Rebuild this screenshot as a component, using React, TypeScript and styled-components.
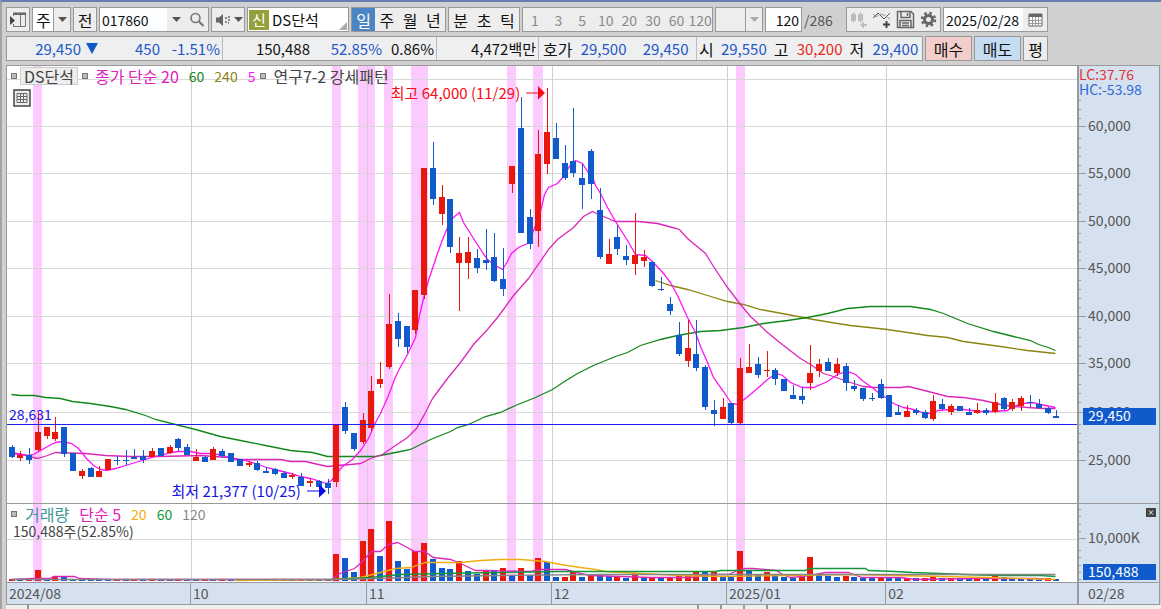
import React from "react";
import styled, { createGlobalStyle, css } from "styled-components";

const GlobalStyle = createGlobalStyle`
  *, *::before, *::after { box-sizing: border-box; }
  body {
    margin: 0;
    background: #d0d0d0;
    color: #111;
    font-family: "Noto Sans CJK KR", sans-serif;
    font-size: 15px;
    line-height: 20px;
  }
  button, input, select { font: inherit; color: inherit; margin: 0; }
`;

const RED = "#e8190c";
const BLUE = "#115acc";
const LINE = "#9a9a9a";

/* ---------- frame ---------- */

const Frame = styled.div`
  border-top: 2px solid #667eb4;
  border-left: 2px solid #a4a4a4;
  min-width: 1060px;
`;

const Toolbar = styled.header`
  display: flex;
  align-items: center;
  gap: 2px;
  padding: 5px 4px 0;
`;

const Group = styled.div<{ $w: number }>`
  display: flex;
  flex: none;
  width: ${(p) => p.$w}px;
  height: 25px;
  border: 1px solid #999;
  background: #eee;
  > * + * { border-left: 1px solid #999; }
`;

const ToolButton = styled.button<{ $w?: number; $on?: boolean; $dim?: boolean }>`
  display: flex;
  align-items: center;
  justify-content: center;
  flex: ${(p) => (p.$w ? `0 0 ${p.$w}px` : "1 1 0")};
  min-width: 0;
  height: 23px;
  padding: 0;
  border: 0;
  border-radius: 0;
  white-space: nowrap;
  font-size: ${(p) => (p.$dim ? 14 : 16)}px;
  background: #ededed;
  color: ${(p) => (p.$dim ? "#8a8a8a" : "#111")};
  ${(p) => p.$on && css`background: #4d84c4; color: #fff;`}
`;

const TextInput = styled.input<{ $right?: boolean }>`
  flex: 1 1 0;
  min-width: 0;
  height: 23px;
  padding: 0 2px;
  border: 0;
  outline: 0;
  border-radius: 0;
  background: #fcfdff;
  font-size: 14px;
  text-align: ${(p) => (p.$right ? "right" : "left")};
`;

const Picker = styled.select<{ $off?: boolean }>`
  appearance: none;
  flex: 1 1 0;
  min-width: 0;
  height: 23px;
  padding: 0 0 0 3px;
  border: 0;
  border-radius: 0;
  outline: 0;
  font-size: 16px;
  background: ${(p) => (p.$off ? "#ededed" : "#fff")};
`;

const ArrowCell = styled.span`
  display: flex;
  align-items: center;
  justify-content: center;
  width: 17px;
  background: #ededed;
`;

const StockName = styled.div`
  position: relative;
  display: flex;
  flex: 1;
  align-items: center;
  gap: 3px;
  padding-left: 1px;
  background: #fff;
  &::after {
    content: "";
    position: absolute;
    right: 1px;
    bottom: 1px;
    border: 4px solid transparent;
    border-right-color: #aaa;
    border-bottom-color: #aaa;
  }
`;

const Badge = styled.span`
  display: flex;
  align-items: center;
  justify-content: center;
  width: 20px;
  height: 20px;
  background: #94a03a;
  color: #fff;
`;

const Total = styled.span`
  width: 40px;
  font-size: 14px;
  color: #555;
`;

const Down = ({ color = "#555" }: { color?: string }) => (
  <svg width="9" height="5" viewBox="0 0 9 5" aria-hidden="true">
    <path d="M0 0H9L4.500 5Z" fill={color} />
  </svg>
);

/* ---------- quote line ---------- */

const QuoteRow = styled.section`
  display: flex;
  gap: 2px;
  padding: 4px 4px 0;
`;

const QuoteBox = styled.div`
  display: flex;
  height: 25px;
  border: 1px solid #999;
  background: #eeeff0;
`;

const QuoteCell = styled.div<{ $w: number }>`
  display: flex;
  align-items: center;
  width: ${(p) => p.$w}px;
  padding: 0 2px;
  white-space: nowrap;
  & + & { border-left: 1px solid #bbb; }
`;

const Value = styled.span<{ $w: number; $c?: string }>`
  width: ${(p) => p.$w}px;
  text-align: right;
  color: ${(p) => p.$c ?? "#111"};
`;

const Caption = styled.span<{ $ml?: number }>`
  margin-left: ${(p) => p.$ml ?? 0}px;
  font-size: 16px;
`;

const Marker = styled.span`
  width: 20px;
  padding-left: 5px;
  line-height: 10px;
`;

const Trade = styled.button<{ $w: number; $bg: string }>`
  width: ${(p) => p.$w}px;
  height: 25px;
  padding: 0;
  border: 1px solid #999;
  border-radius: 0;
  background: ${(p) => p.$bg};
  font-size: 16px;
`;

/* ---------- chart ---------- */

const ChartBox = styled.main`
  display: grid;
  grid-template-columns: minmax(0, 1fr) 82px;
  margin: 4px 1px 0 4px;
  border: 1px solid ${LINE};
  background: #fff;
`;

const Plot = styled.div<{ $h: number }>`
  position: relative;
  height: ${(p) => p.$h}px;
  border-bottom: 1px solid ${LINE};
`;

const Scale = styled.div`
  position: relative;
  border-left: 2px solid ${LINE};
  border-bottom: 1px solid ${LINE};
  background: #d6e1ef;
`;

const Canvas = styled.svg`
  display: block;
  width: 100%;
  height: 100%;
`;

const Legend = styled.div<{ $top: number }>`
  position: absolute;
  top: ${(p) => p.$top}px;
  left: 4px;
  display: flex;
  align-items: center;
  height: 18px;
  white-space: nowrap;
  color: #444;
  font-size: 16px;
`;

const Square = styled.i<{ $mr: number; $ml?: number }>`
  width: 6px;
  height: 6px;
  margin-right: ${(p) => p.$mr}px;
  margin-left: ${(p) => p.$ml ?? 0}px;
  border: 1px solid #777;
  background: #bbb;
`;

const Chip = styled.span`
  padding: 0 3px;
  height: 18px;
  line-height: 17px;
  border: 1px solid #ccc;
  background: #eee;
`;

const Term = styled.span<{ $c: string; $mr: number; $num?: boolean }>`
  margin-right: ${(p) => p.$mr}px;
  font-size: ${(p) => (p.$num ? 14 : 16)}px;
  color: ${(p) => p.$c};
`;

const TableButton = styled.button`
  position: absolute;
  top: 23px;
  left: 6px;
  width: 18px;
  height: 18px;
  padding: 0;
  border: 0;
  background: none;
`;

const Note = styled.div<{ $right: string; $top: number; $c: string }>`
  position: absolute;
  right: ${(p) => p.$right};
  top: ${(p) => p.$top}px;
  display: flex;
  align-items: center;
  gap: 6px;
  height: 18px;
  white-space: nowrap;
  color: ${(p) => p.$c};
`;

const LevelLabel = styled.span`
  position: absolute;
  left: 2px;
  top: 338px;
  font-size: 14px;
  color: #1414e6;
`;

const VolumeText = styled.span`
  position: absolute;
  left: 6px;
  top: 18px;
  font-size: 14px;
  line-height: 18px;
  color: #444;
`;

const ClosePane = styled.button`
  position: absolute;
  top: 4px;
  right: 3px;
  display: flex;
  width: 10px;
  height: 9px;
  padding: 0;
  border: 0;
  background: #444;
`;

const Dates = styled.div`
  display: flex;
  height: 21px;
  background: #d6e1ef;
  font-size: 14px;
  color: #555;
`;

const DateCell = styled.span<{ $grow: number }>`
  flex: ${(p) => p.$grow} 1 0;
  padding-left: 2px;
  & + & { border-left: 1px solid ${LINE}; }
`;

const LastDate = styled.div`
  padding-left: 9px;
  border-left: 2px solid ${LINE};
  background: #d6e1ef;
  font-size: 14px;
  color: #555;
`;

const Footer = styled.footer`
  display: flex;
  height: 5px;
  margin-left: 4px;
  background: #f0f0f0;
`;

const FootTab = styled.span<{ $w: string }>`
  width: ${(p) => p.$w};
  border-right: 2px solid #999;
`;

/* ---------- data: direction, body top, body bottom, high, low ---------- */

type Candle = [0 | 1, number, number, number, number];

const candles: Candle[] = [
  [0, 447, 457, 445, 458], [1, 455, 458, 451, 461], [0, 455, 460, 448, 464], [1, 432, 450, 412, 452],
  [1, 427, 436, 427, 439], [1, 432, 439, 417, 441], [0, 427, 454, 427, 457], [0, 453, 471, 453, 471],
  [1, 471, 476, 469, 479], [0, 468, 477, 467, 477], [1, 471, 477, 466, 477], [1, 459, 470, 459, 470],
  [0, 460, 461, 456, 465], [0, 460, 461, 450, 465], [0, 457, 459, 449, 459], [0, 456, 460, 450, 463],
  [1, 451, 457, 448, 457], [0, 448, 456, 448, 456], [1, 447, 453, 445, 454], [0, 439, 448, 438, 451],
  [0, 447, 455, 444, 455], [1, 457, 461, 449, 461], [0, 457, 462, 456, 462], [1, 449, 460, 447, 460],
  [0, 451, 456, 449, 458], [0, 453, 462, 453, 462], [0, 459, 466, 459, 466], [1, 463, 465, 461, 467],
  [0, 463, 470, 461, 471], [0, 471, 473, 467, 473], [0, 469, 474, 468, 475], [0, 473, 478, 471, 478],
  [1, 475, 477, 473, 479], [0, 477, 486, 473, 486], [1, 481, 483, 479, 487], [0, 481, 487, 480, 487],
  [0, 483, 488, 479, 494], [1, 425, 482, 425, 487], [0, 407, 431, 402, 434], [0, 433, 449, 433, 451],
  [1, 420, 442, 413, 444], [1, 391, 428, 376, 431], [1, 379, 384, 362, 388], [1, 324, 367, 294, 369],
  [0, 321, 339, 313, 347], [0, 326, 347, 326, 353], [1, 290, 330, 290, 334], [1, 168, 295, 168, 299],
  [0, 168, 199, 142, 205], [1, 197, 214, 185, 225], [0, 199, 247, 199, 253], [1, 253, 263, 237, 311],
  [1, 252, 263, 237, 279], [0, 258, 268, 249, 273], [0, 260, 263, 229, 270], [0, 257, 281, 233, 282],
  [0, 279, 289, 248, 296], [1, 166, 184, 166, 193], [0, 128, 233, 97, 233], [0, 217, 244, 209, 249],
  [1, 154, 231, 130, 247], [1, 132, 164, 88, 174], [0, 138, 159, 123, 159], [0, 163, 178, 145, 180],
  [0, 161, 173, 108, 177], [0, 178, 185, 164, 209], [0, 151, 184, 149, 199], [0, 210, 257, 188, 259],
  [1, 254, 264, 239, 264], [0, 237, 249, 225, 255], [0, 256, 260, 245, 265], [1, 255, 264, 213, 275],
  [1, 257, 261, 250, 267], [0, 262, 286, 261, 287], [0, 289, 290, 277, 291], [0, 304, 311, 297, 315],
  [0, 335, 354, 322, 356], [1, 348, 361, 320, 367], [0, 354, 368, 320, 371], [0, 367, 407, 365, 410],
  [0, 410, 414, 400, 426], [1, 407, 419, 398, 419], [0, 403, 423, 403, 425], [1, 368, 423, 358, 425],
  [1, 367, 373, 344, 373], [0, 364, 375, 357, 378], [1, 370, 371, 351, 377], [0, 370, 379, 368, 385],
  [0, 379, 391, 379, 391], [0, 395, 399, 385, 399], [0, 396, 400, 387, 404], [1, 373, 383, 345, 390],
  [1, 364, 371, 359, 377], [0, 362, 371, 358, 371], [1, 364, 373, 358, 376], [0, 366, 383, 363, 391],
  [0, 386, 389, 380, 391], [0, 388, 399, 388, 401], [0, 398, 399, 393, 401], [0, 384, 398, 379, 399],
  [0, 395, 417, 395, 417], [0, 412, 415, 405, 415], [1, 411, 417, 405, 417], [0, 410, 413, 408, 415],
  [0, 412, 418, 410, 419], [1, 401, 419, 395, 421], [0, 404, 409, 399, 410], [1, 406, 412, 404, 415],
  [0, 406, 411, 406, 411], [0, 412, 415, 408, 415], [1, 410, 413, 403, 414], [0, 410, 413, 408, 415],
  [1, 402, 412, 393, 413], [0, 398, 409, 397, 410], [1, 402, 409, 399, 411], [1, 398, 406, 396, 411],
  [0, 402, 403, 395, 407], [0, 404, 408, 399, 409], [0, 408, 413, 407, 414], [0, 416, 418, 410, 418],
];

const volumeTops = [
  579, 579, 579, 570, 579, 577, 576, 579, 579, 579, 579, 579, 579, 579, 579, 579, 579, 579, 579, 579,
  579, 579, 579, 579, 579, 579, 579, 579, 579, 579, 579, 579, 579, 579, 579, 579, 579, 554, 558, 572,
  541, 529, 556, 521, 561, 569, 551, 543, 559, 568, 569, 561, 571, 574, 570, 571, 568, 575, 568, 575,
  558, 562, 577, 577, 571, 577, 575, 575, 576, 577, 578, 573, 578, 577, 577, 577, 575, 575, 571, 571,
  571, 577, 577, 551, 570, 575, 572, 575, 577, 578, 577, 557, 574, 576, 577, 576, 577, 578, 578, 578,
  578, 578, 578, 578, 578, 577, 578, 578, 578, 578, 578, 578, 576, 577, 578, 578, 578, 578, 578, 579,
];

const volumeSides = [
  "RBRRBRBBBB", "BBRBRBRBBR", "BBRBRBBRBB", "BRBRBBBRBB", "RRBRBBRRBB", "BRBBRBRBRB",
  "RBBRRBRBBR", "BRBRBRRRRB", "RBBRBBRBBB", "RRBBBRBBBR", "BBRBRRBRBB", "RBRBBBBBRB",
].join("");

const cx = (i: number) => Math.round(11.5 + i * 8.78);

const bands = [[33, 9], [332, 9], [358, 17], [384, 9], [411, 17], [507, 9], [533, 10], [736, 9]];
const months = [191, 367, 552, 727, 886];
const priceLines = [79, 126, 173, 221, 268, 316, 363, 412, 460];

const ma5 = "11,453 20,454 29,455 33,454 40,450 49,445 55,442 62,441 71,443 78,448 86,458 93,465 100,469 106,470 115,468 125,465 135,462 145,459 155,456 163,454 170,452 178,451 190,451 200,453 212,453 222,455 235,459 245,460 258,464 266,467 278,470 290,473 300,476 310,478 320,481 326,483 331,480 336,473 342,466 352,459 360,450 368,438 375,422 380,413 388,395 394,379 398,370 407,354 415,337 419,315 423,298 428,280 433,265 437,253 442,239 447,227 450,220 454,216 459,212 463,222 468,230 475,241 482,252 487,259 495,265 502,269 507,261 511,253 518,247 527,243 530,238 533,230 537,220 541,207 544,194 548,187 557,183 563,176 569,166 575,160 582,163 587,171 592,176 595,185 600,193 607,207 615,221 627,240 635,254 645,255 653,262 663,273 670,282 677,295 687,317 695,332 700,346 707,362 713,377 723,391 731,403 737,404 745,398 757,388 767,379 776,373 782,375 790,382 802,387 813,387 827,381 837,374 843,372 850,372 855,374 863,381 873,388 880,394 887,398 893,403 903,407 913,409 922,412 930,413 938,410 950,409 963,409 980,411 993,411 1007,410 1013,406 1023,403 1032,402 1040,404 1050,406 1055,407";
const ma20 = "11,452 22,454 33,457 37,458 47,455 55,452 85,453 105,455 130,456 160,456 200,455 228,457 240,459 280,459 290,461 305,461 318,464 327,466 337,465 350,464 360,463 370,458 382,454 395,445 407,437 416,428 425,412 432,398 438,390 447,378 460,362 473,344 487,329 497,317 503,309 513,295 528,278 537,265 548,249 557,239 573,227 583,216 592,211 596,213 610,219 615,221 638,221 657,223 672,227 679,229 687,238 705,253 713,266 727,287 740,304 750,316 767,332 783,345 800,358 810,364 823,373 833,376 847,381 863,386 873,387 900,387 908,386 920,389 947,396 963,397 983,400 1000,404 1013,406 1027,407 1043,408 1055,408";
const ma60 = "11,394 20,395 34,395 45,397 60,398 72,401 90,403 110,406 125,409 145,415 155,419 175,424 195,429 220,436 245,441 265,445 290,450 312,452 327,456 375,456 385,454 400,451 410,449 430,439 450,431 457,427 468,424 485,416 500,412 515,405 535,397 552,389 564,381 577,373 593,365 615,356 627,352 640,345 660,339 677,335 700,331 720,330 743,327 763,323 787,320 807,317 827,313 847,308 870,306 887,306 910,306 930,309 943,313 967,323 993,331 1013,336 1030,340 1038,344 1048,347 1055,350";
const ma240 = "655,280 670,285 687,289 707,295 727,301 743,304 760,309 787,314 813,319 837,323 850,325 887,329 927,335 947,337 963,341 1000,346 1027,350 1055,353";

const vol5 = "11,579 33,578 50,578 53,576 74,576 79,578 110,579 331,579 337,574 345,571 354,568 362,561 371,551 380,551 388,544 397,542 405,546 414,551 424,551 433,557 450,559 458,562 475,570 485,570 530,571 540,569 565,569 580,573 590,575 620,576 650,577 690,577 703,575 710,574 728,574 737,570 745,568 753,568 776,570 782,574 790,577 802,576 815,574 825,572 848,572 853,574 862,577 900,577 915,579 980,578 1035,578 1050,579";
const vol20 = "235,580 331,579 360,577 380,572 395,568 410,567 425,562 460,562 480,560 500,559 520,559 545,561 560,564 580,567 595,569 605,571 640,573 680,575 720,576 790,575 850,574 895,575 940,576 990,577 1055,579";
const vol60 = "331,579 370,577 400,574 440,573 500,572 560,571 600,571 715,571 720,570 805,570 808,568 865,568 868,570 895,571 912,572 940,573 965,574 1000,575 1040,575 1055,576";
const vol120 = "11,579 331,579 380,578 430,576 500,575 600,574 800,574 1055,574";

const Trace = ({ points, color }: { points: string; color: string }) => (
  <polyline points={points} fill="none" stroke={color} strokeWidth="1.3" vectorEffect="non-scaling-stroke" transform="translate(0.5 0.5)" />
);

const Grid = ({ rows, top, bottom }: { rows: number[]; top: number; bottom: number }) => (
  <g shapeRendering="crispEdges">
    {bands.map(([x, w]) => <rect key={x} x={x} y={top} width={w} height={bottom - top} fill="#fdcaff" />)}
    {rows.map((y) => <rect key={y} x="7" y={y} width="1070" height="1" fill="#d8d8d8" />)}
    {months.map((x) => <rect key={x} x={x} y={top} width="1" height={bottom - top} fill="#d0d0d0" />)}
  </g>
);

const PriceChart = () => (
  <Canvas viewBox="7 66 1070 437" preserveAspectRatio="none" role="img" aria-label="DS단석 일봉">
    <Grid rows={priceLines} top={66} bottom={503} />
    <Trace points={ma240} color="#8c8412" />
    <Trace points={ma60} color="#12881a" />
    <Trace points={ma20} color="#dc28b8" />
    <Trace points={ma5} color="#ff14f4" />
    <g shapeRendering="crispEdges">
      {candles.map(([up, top, bottom, high, low], i) => (
        <g key={i} fill={up ? RED : BLUE}>
          <rect x={cx(i)} y={high} width="1" height={Math.max(1, low - high)} />
          <rect x={cx(i) - 3} y={top} width="6" height={bottom - top} />
        </g>
      ))}
      <rect x="7" y="424" width="1070" height="1" fill="#2020f0" />
    </g>
  </Canvas>
);

const VolumeChart = () => (
  <Canvas viewBox="7 504 1070 78" preserveAspectRatio="none" role="img" aria-label="거래량">
    <Grid rows={[539]} top={504} bottom={582} />
    <g shapeRendering="crispEdges">
      {volumeTops.map((y, i) => (
        <rect key={i} x={cx(i) - 3} y={y} width="6" height={581 - y} fill={volumeSides[i] === "R" ? RED : BLUE} />
      ))}
    </g>
    <Trace points={vol5} color="#dc28b8" />
    <Trace points={vol20} color="#f0ac10" />
    <Trace points={vol60} color="#109838" />
    <Trace points={vol120} color="#858585" />
  </Canvas>
);

const AxisText = styled.text<{ $c?: string }>`
  font-size: 14px;
  fill: ${(p) => p.$c ?? "#555"};
`;

const priceLabels: [number, string][] = [
  [126, "60,000"], [173, "55,000"], [221, "50,000"], [268, "45,000"],
  [316, "40,000"], [363, "35,000"], [412, "30,000"], [460, "25,000"],
];

const minorPrice = [79, ...priceLabels.map(([y]) => y)]
  .flatMap((y) => [y + 12, y + 21, y + 30, y + 39])
  .filter((y) => y > 98 && y < 455);

const PriceScale = () => (
  <Canvas viewBox="1080 66 80 437">
    <AxisText x="1080" y="80" $c="#e03434">LC:37.76</AxisText>
    <AxisText x="1080" y="95" $c="#2c6cd4">HC:-53.98</AxisText>
    {minorPrice.map((y) => <rect key={y} x="1080" y={y} width="2" height="1" fill="#999" />)}
    {priceLabels.map(([y, t]) => (
      <g key={t}>
        <rect x="1080" y={y} width="7" height="1" fill="#999" />
        <AxisText x="1089" y={y + 5}>{t}</AxisText>
      </g>
    ))}
    <rect x="1084" y="408" width="73" height="17" fill={BLUE} />
    <AxisText x="1089" y="421" $c="#fff">29,450</AxisText>
  </Canvas>
);

const VolumeScale = () => (
  <Canvas viewBox="1080 504 80 78">
    {[509, 516, 524, 531, 550, 557, 565, 572, 579].map((y) => (
      <rect key={y} x="1080" y={y} width="2" height="1" fill="#999" />
    ))}
    <rect x="1080" y="538" width="7" height="1" fill="#999" />
    <AxisText x="1089" y="543">10,000K</AxisText>
    <rect x="1084" y="564" width="73" height="16" fill={BLUE} />
    <AxisText x="1089" y="577" $c="#fff">150,488</AxisText>
  </Canvas>
);

const Arrow = ({ color }: { color: string }) => (
  <svg width="19" height="14" viewBox="0 0 19 14" aria-hidden="true">
    <path d="M0 6.500H12V0L19 7L12 13.500V7.500H0Z" fill={color} />
  </svg>
);

/* ---------- toolbar icons ---------- */

const PanelIcon = () => (
  <svg width="18" height="18" viewBox="0 0 18 18" fill="none" aria-hidden="true">
    <path d="M4 2.500H16.500V15.500H4" stroke="#777" />
    <path d="M4 1.500H17V4H4Z" fill="#666" />
    <path d="M11.500 4V15M4.500 2V5M4.500 13V16" stroke="#777" />
    <path d="M1 5L6 9.500L1 14Z" fill="#444" />
  </svg>
);

const SearchIcon = () => (
  <svg width="16" height="16" viewBox="0 0 16 16" fill="none" stroke="#777" aria-hidden="true">
    <circle cx="6.500" cy="6" r="4.500" strokeWidth="1.600" />
    <path d="M10 9.500L14.500 14" strokeWidth="2.200" />
  </svg>
);

const SpeakerIcon = () => (
  <svg width="16" height="14" viewBox="0 0 16 14" aria-hidden="true">
    <path d="M1 4.500H4L8 1V13L4 9.500H1Z" fill="#666" />
    <path d="M10 4h2v2h-2zM10 8h2v2h-2zM13 3h2v2h-2zM13 6h2v2h-2zM13 9h1v2h-1z" fill="#888" />
  </svg>
);

const CandlesIcon = () => (
  <svg width="20" height="20" viewBox="0 0 20 20" fill="#bcbcbc" aria-hidden="true">
    <path d="M2 4h5v7H2zM4 2h1v11H4zM9 4h5v7H9zM11 2h1v11h-1z" />
    <path d="M11 15L15 11.500V14H18V16H15V18.500Z" />
  </svg>
);

const WaveIcon = () => (
  <svg width="20" height="20" viewBox="0 0 20 20" fill="none" aria-hidden="true">
    <path d="M1 8L6 3L12 9L18 3" stroke="#555" />
    <path d="M1 4L4 7L8 4L12 5L18 9" stroke="#999" />
    <path d="M14.500 11V18M11 14.500H18" stroke="#444" strokeWidth="2" />
  </svg>
);

const SaveIcon = () => (
  <svg width="19" height="19" viewBox="0 0 19 19" fill="none" stroke="#666" strokeWidth="1.500" aria-hidden="true">
    <path d="M1.500 1.500H15L17.500 4V17.500H1.500Z" />
    <path d="M5 2V7.500H14V2M11.500 3V6M4 17V10.500H15V17M6 13H13M6 15.500H13" />
  </svg>
);

const GearIcon = () => (
  <svg width="17" height="17" viewBox="0 0 17 17" fill="none" stroke="#666" aria-hidden="true">
    <circle cx="8.500" cy="8.500" r="4" strokeWidth="3" />
    <circle cx="8.500" cy="8.500" r="6.500" strokeWidth="2.500" strokeDasharray="2.550 2.555" />
  </svg>
);

const CalendarIcon = () => (
  <svg width="15" height="14" viewBox="0 0 15 14" aria-hidden="true">
    <path d="M1 1H14V13H1Z" fill="#fff" stroke="#666" />
    <path d="M1 1H14V4H1Z" fill="#666" />
    <path d="M1 7.500H14M1 10.500H14M4.500 4V13M7.500 4V13M10.500 4V13" stroke="#999" />
  </svg>
);

const quickTicks = ["1", "3", "5", "10", "20", "30", "60", "120"];

export default function App() {
  return (
    <>
      <GlobalStyle />
      <Frame>
        <Toolbar>
          <Group $w={24}><ToolButton aria-label="패널"><PanelIcon /></ToolButton></Group>
          <Group $w={39}>
            <Picker aria-label="종목 구분"><option>주</option></Picker>
            <ArrowCell><Down /></ArrowCell>
          </Group>
          <Group $w={24}><ToolButton>전</ToolButton></Group>
          <Group $w={110}>
            <TextInput defaultValue="017860" aria-label="종목코드" />
            <ToolButton $w={18} aria-label="최근 종목"><Down /></ToolButton>
            <ToolButton $w={23} aria-label="검색"><SearchIcon /></ToolButton>
          </Group>
          <Group $w={34}>
            <ToolButton $w={21} aria-label="소리"><SpeakerIcon /></ToolButton>
            <ToolButton aria-label="소리 설정"><Down /></ToolButton>
          </Group>
          <Group $w={102}>
            <StockName><Badge>신</Badge>DS단석</StockName>
          </Group>
          <Group $w={95}>
            {["일", "주", "월", "년"].map((t) => <ToolButton key={t} $on={t === "일"}>{t}</ToolButton>)}
          </Group>
          <Group $w={72}>
            {["분", "초", "틱"].map((t) => <ToolButton key={t}>{t}</ToolButton>)}
          </Group>
          <Group $w={191}>
            {quickTicks.map((t) => <ToolButton key={t} $dim>{t}</ToolButton>)}
          </Group>
          <Group $w={48}>
            <Picker $off aria-label="사용자 주기"><option></option></Picker>
            <ArrowCell><Down color="#aaa" /></ArrowCell>
          </Group>
          <Group $w={37}><TextInput $right defaultValue="120" aria-label="봉 개수" /></Group>
          <Total>/286</Total>
          <Group $w={95}>
            <ToolButton aria-label="봉 이동"><CandlesIcon /></ToolButton>
            <ToolButton aria-label="지표 추가"><WaveIcon /></ToolButton>
            <ToolButton aria-label="저장"><SaveIcon /></ToolButton>
            <ToolButton aria-label="설정"><GearIcon /></ToolButton>
          </Group>
          <Group $w={105}>
            <TextInput defaultValue="2025/02/28" aria-label="기준일" />
            <ToolButton $w={24} aria-label="달력"><CalendarIcon /></ToolButton>
          </Group>
        </Toolbar>

        <QuoteRow>
          <QuoteBox>
            <QuoteCell $w={215}>
              <Value $w={72} $c="#2357c8">29,450</Value>
              <Marker>
                <svg width="12" height="11" viewBox="0 0 12 11" aria-hidden="true"><path d="M0 0H12L6 11Z" fill={BLUE} /></svg>
              </Marker>
              <Value $w={59} $c="#2357c8">450</Value>
              <Value $w={60} $c="#2357c8">-1.51%</Value>
            </QuoteCell>
            <QuoteCell $w={214}>
              <Value $w={85}>150,488</Value>
              <Value $w={72} $c="#2357c8">52.85%</Value>
              <Value $w={52}>0.86%</Value>
            </QuoteCell>
            <QuoteCell $w={102}>
              <Value $w={97}>4,472백만</Value>
            </QuoteCell>
            <QuoteCell $w={158}>
              <Caption $ml={2}>호가</Caption>
              <Value $w={54} $c="#2357c8">29,500</Value>
              <Value $w={62} $c="#2357c8">29,450</Value>
            </QuoteCell>
            <QuoteCell $w={226}>
              <Caption>시</Caption>
              <Value $w={53} $c="#2357c8">29,550</Value>
              <Caption $ml={7}>고</Caption>
              <Value $w={54} $c="#e62a20">30,200</Value>
              <Caption $ml={7}>저</Caption>
              <Value $w={54} $c="#2357c8">29,400</Value>
            </QuoteCell>
          </QuoteBox>
          <Trade $w={47} $bg="#f3cdc9">매수</Trade>
          <Trade $w={47} $bg="#c6dcf2">매도</Trade>
          <Trade $w={25} $bg="#ececec">평</Trade>
        </QuoteRow>

        <ChartBox>
          <Plot $h={438}>
            <PriceChart />
            <Legend $top={1}>
              <Square $mr={3} />
              <Chip>DS단석</Chip>
              <Square $ml={4} $mr={7} />
              <Term $c="#e020bc" $mr={10}>종가 단순 20</Term>
              <Term $c="#108820" $mr={10} $num>60</Term>
              <Term $c="#8c8412" $mr={10} $num>240</Term>
              <Term $c="#ff14f4" $mr={5} $num>5</Term>
              <Square $mr={7} />
              <span>연구7-2 강세패턴</span>
            </Legend>
            <TableButton aria-label="데이터 표">
              <svg width="18" height="18" viewBox="0 0 18 18" fill="none" aria-hidden="true">
                <path d="M1 1H17V17H1Z" fill="#eee" stroke="#444" strokeWidth="1.500" />
                <path d="M4 4.500H14V13.500H4ZM4 7.500H14M4 10.500H14M7.500 4V14M10.500 4V14" stroke="#666" />
              </svg>
            </TableButton>
            <Note $right="49.700%" $top={18} $c="#fa0a14">최고 64,000 (11/29)<Arrow color="#fa0a14" /></Note>
            <Note $right="70.200%" $top={416} $c="#1414e6">최저 21,377 (10/25)<Arrow color="#0a0af0" /></Note>
            <LevelLabel>28,631</LevelLabel>
          </Plot>
          <Scale><PriceScale /></Scale>

          <Plot $h={79}>
            <VolumeChart />
            <Legend $top={1}>
              <Square $mr={8} />
              <Term $c="#3c9696" $mr={10}>거래량</Term>
              <Term $c="#e020bc" $mr={10}>단순 5</Term>
              <Term $c="#f0ac10" $mr={10} $num>20</Term>
              <Term $c="#109838" $mr={10} $num>60</Term>
              <Term $c="#888" $mr={0} $num>120</Term>
            </Legend>
            <VolumeText>150,488주(52.85%)</VolumeText>
          </Plot>
          <Scale>
            <VolumeScale />
            <ClosePane aria-label="닫기">
              <svg width="10" height="9" viewBox="0 0 10 9" aria-hidden="true">
                <path d="M3 2.500L7 6.500M7 2.500L3 6.500" stroke="#fff" />
              </svg>
            </ClosePane>
          </Scale>

          <Dates>
            <DateCell $grow={184}>2024/08</DateCell>
            <DateCell $grow={176}>10</DateCell>
            <DateCell $grow={185}>11</DateCell>
            <DateCell $grow={175}>12</DateCell>
            <DateCell $grow={159}>2025/01</DateCell>
            <DateCell $grow={192}>02</DateCell>
          </Dates>
          <LastDate>02/28</LastDate>
        </ChartBox>
        <Footer>
          <FootTab $w="2%" />
          <FootTab $w="58%" />
          <FootTab $w="2%" />
          <FootTab $w="2%" />
          <FootTab $w="2%" />
          <FootTab $w="2%" />
        </Footer>
      </Frame>
    </>
  );
}
